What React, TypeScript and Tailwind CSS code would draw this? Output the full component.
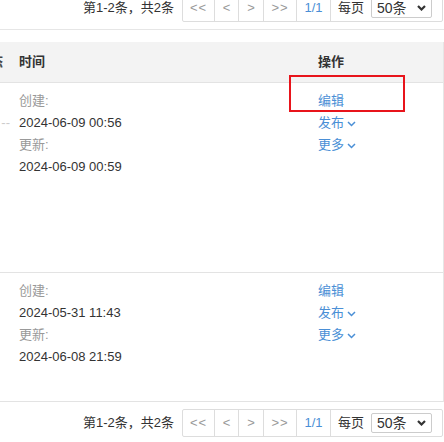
import React from 'react';

const font = { fontFamily: '"Liberation Sans", "Noto Sans CJK SC", sans-serif' };

interface Row {
  created: string;
  updated: string;
  height: string;
  dash?: boolean;
}

const rows: Row[] = [
  { created: '2024-06-09 00:56', updated: '2024-06-09 00:59', height: 'h-[190px]', dash: true },
  { created: '2024-05-31 11:43', updated: '2024-06-08 21:59', height: 'h-[129px]' },
];

function Caret() {
  return (
    <svg width="9" height="6" viewBox="0 0 9 6" className="ml-[3px] mt-[2px]">
      <path d="M1 1l3.5 3.5L8 1" fill="none" stroke="#4a8fd6" strokeWidth="1.5" />
    </svg>
  );
}

function Pager({ className = '' }: { className?: string }) {
  return (
    <div className={`flex items-center justify-end pr-[1px] text-[13px] ${className}`}>
      <span className="mr-[8px] text-[#333]">第1-2条，共2条</span>
      <div className="flex h-[28px] border border-[#ddd] rounded-[2px]">
        <span className="w-[32px] border-r border-[#ddd] flex items-center justify-center text-[#999] tracking-[1px]">&lt;&lt;</span>
        <span className="w-[24px] border-r border-[#ddd] flex items-center justify-center text-[#999]">&lt;</span>
        <span className="w-[25px] border-r border-[#ddd] flex items-center justify-center text-[#999]">&gt;</span>
        <span className="w-[33px] border-r border-[#ddd] flex items-center justify-center text-[#999] tracking-[1px]">&gt;&gt;</span>
        <span className="w-[34px] border-r border-[#ddd] flex items-center justify-center text-[#4a8fd6]">1/1</span>
        <div className="flex items-center pl-[7px] pr-[10px]">
          <span className="text-[#333]">每页</span>
          <div className="ml-[7px] w-[61px] h-[20px] border border-[#ccc] rounded-[2px] flex items-center justify-between pl-[5px] pr-[5px] text-[#333] text-[14px]">
            <span>50条</span>
            <svg width="9" height="6" viewBox="0 0 9 6">
              <path d="M1 1l3.5 3.5L8 1" fill="none" stroke="#333" strokeWidth="2.2" />
            </svg>
          </div>
        </div>
      </div>
    </div>
  );
}

export default function App() {
  return (
    <div className="w-[444px] h-[442px] overflow-hidden bg-white" style={font}>
      <Pager className="mt-[-6px]" />
      <div className="mt-[7px] border-t border-[#e6e6e6]" />

      {/* list table, scrolled so the first columns are off to the left */}
      <div className="mt-[12px] w-[444px] overflow-hidden border-r border-[#e6e6e6] text-[13px] leading-[22px]">
        <div className="ml-[-40px] w-[484px]">
          <div className="grid grid-cols-[50px_290px_144px] h-[41px] items-center bg-[#f3f3f3] border-b border-[#e3e3e3] font-bold text-[#333]">
            <div className="text-right whitespace-nowrap pr-[7px] text-[#444]">状态</div>
            <div className="pl-[9px]">时间</div>
            <div className="pl-[18px]">操作</div>
          </div>

          {rows.map((r) => (
            <div key={r.created} className={`grid grid-cols-[50px_290px_144px] ${r.height} border-b border-[#e3e3e3] pt-[7px]`}>
              <div className="pt-[22px] text-right text-[#ccc]">{r.dash ? '--' : ''}</div>
              <div className="pl-[9px]">
                <div className="text-[#999]">创建:</div>
                <div className="text-[#333]">{r.created}</div>
                <div className="text-[#999]">更新:</div>
                <div className="text-[#333]">{r.updated}</div>
              </div>
              <div className="pl-[18px] text-[#4a8fd6]">
                <div>编辑</div>
                <div className="flex items-center">发布<Caret /></div>
                <div className="flex items-center">更多<Caret /></div>
              </div>
            </div>
          ))}
        </div>
      </div>

      <Pager className="mt-[7px]" />

      {/* highlight box around the edit action */}
      <div className="absolute left-[289px] top-[75px] w-[116px] h-[37px] border-2 border-[#e8141b]" />
    </div>
  );
}
